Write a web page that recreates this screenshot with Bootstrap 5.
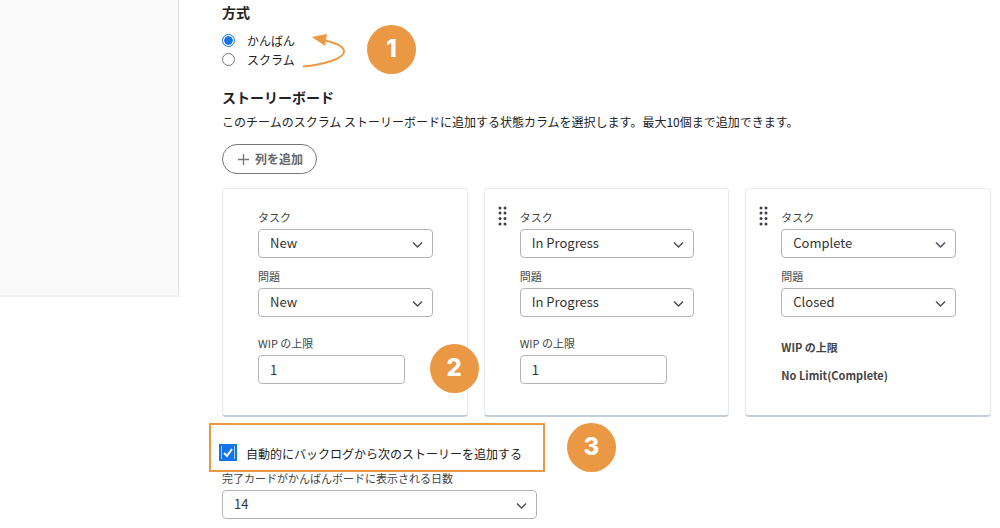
<!DOCTYPE html>
<html lang="ja">
<head>
<meta charset="utf-8">
<meta name="viewport" content="width=device-width, initial-scale=1">
<title>チーム設定</title>
<link rel="stylesheet" href="https://cdn.jsdelivr.net/npm/bootstrap@5.3.0/dist/css/bootstrap.min.css">
<style>
  body { font-family: "Noto Sans CJK JP", sans-serif; font-size: 12px; line-height: 20px; color: #222; background: #fff; }
  .side-panel { width: 179px; height: 297px; background: #fafafa; border-right: 1px solid #e1e1e1; border-bottom: 2px solid #f0f0f0; }
  .settings { padding: 1px 9px 8px 43px; min-width: 0; }
  .section-title { font-size: 14px; line-height: 22px; font-weight: 700; margin: 0; }
  .board-title { margin-top: 12px; }
  .method { margin-top: 8px; }
  .method .form-check { display: flex; align-items: center; min-height: 0; height: 19px; padding: 0; margin: 0; }
  .method .form-check-input { width: 13px; height: 13px; margin: 0 12px 0 0; float: none; border-color: #767676; box-shadow: none; }
  .method .form-check-input:checked { background: #1473e6 content-box; border: 1px solid #1473e6; padding: 1px; box-shadow: inset 0 0 0 1px #fff; }
  .step { width: 49px; height: 49px; border-radius: 50%; background: #eb9844; color: #fff; font: 800 24px/48px Inter, sans-serif; text-align: center; flex: none; }
  .method-step { margin: 2px 0 0 19px; }
  .auto-step { margin: 6px 0 0 22px; }
  .arrow { margin: 3px 0 0 5px; }
  .btn-add { font-size: 12px; line-height: 18px; font-weight: 700; color: #666; border: 1px solid #777; border-radius: 15px; padding: 5px 13px 5px 15px; margin: 12px 0 14px; }
  .btn-add svg { margin-right: 6px; }
  .column-card { height: 100%; padding: 18px 34px 30px 35px; border: 1px solid #e6eaec; border-bottom: 2px solid #c5ced6; border-radius: 4px; }
  .field-label { display: block; font-size: 11px; line-height: 20px; color: #444; margin: 0 0 2px; }
  .field { font-size: 13px; line-height: 18px; height: 29px; min-height: 0; color: #333; padding: 4px 11px 5px; border: 1px solid #b3b3b3; border-radius: 4px; }
  select.field { background: #fff url("data:image/svg+xml,%3Csvg xmlns='http://www.w3.org/2000/svg' width='11' height='8'%3E%3Cpath d='M1 1.5l4.5 4.5L10 1.5' fill='none' stroke='%234b4f59' stroke-width='1.5'/%3E%3C/svg%3E") no-repeat right 9px top 11px / 11px 8px; }
  .wip { margin-top: 16px; }
  .wip .field { width: 147px; max-width: 100%; }
  .limit { font-size: 11px; line-height: 20px; font-weight: 700; color: #444; }
  .grip { position: absolute; left: 13px; top: 17px; }
  .on-card { position: absolute; right: -12px; bottom: 22px; z-index: 2; }
  .highlight { width: 336px; height: 49px; margin: 6px 0 0 -13px; padding: 19px 0 0 8px; border: 2px solid #eb9844; }
  .auto-check[type=checkbox] { width: 18px; height: 17px; margin: 0 9px 0 0; border: 0; border-radius: 0; flex: none; }
  .auto-check:checked { background: #1473e6 url("data:image/svg+xml,%3Csvg xmlns='http://www.w3.org/2000/svg' viewBox='0 0 18 17'%3E%3Cpath d='M2.5 2v13M15.5 2v13' stroke='%23a9cdf8'/%3E%3Cpath d='M5 9l3 3 5-7' fill='none' stroke='%23fff' stroke-width='2'/%3E%3C/svg%3E") center / 18px 17px no-repeat; }
  .days { width: 315px; max-width: 100%; margin-top: -4px; }
</style>
</head>
<body>
<div class="d-flex align-items-start">
  <aside class="side-panel flex-shrink-0"></aside>
  <main class="settings flex-grow-1">
    <h2 class="section-title">方式</h2>
    <div class="d-flex align-items-start">
      <div class="method">
        <div class="form-check">
          <input class="form-check-input" type="radio" name="method" id="kanban" checked>
          <label for="kanban">かんばん</label>
        </div>
        <div class="form-check">
          <input class="form-check-input" type="radio" name="method" id="scrum">
          <label for="scrum">スクラム</label>
        </div>
      </div>
      <svg class="arrow" width="48" height="46" viewBox="300 26 48 46" aria-hidden="true">
        <path d="M303 66.500C322 65 344 59 344 51.500C344 47 336 43 325 40.500" fill="none" stroke="#eb9844" stroke-width="2"/>
        <path d="M312 37l15-3-2 12z" fill="#eb9844"/>
      </svg>
      <div class="step method-step">1</div>
    </div>

    <h2 class="section-title board-title">ストーリーボード</h2>
    <p class="mb-0 mt-1">このチームのスクラム ストーリーボードに追加する状態カラムを選択します。最大10個まで追加できます。</p>
    <button type="button" class="btn btn-add d-flex align-items-center">
      <svg width="11" height="11" viewBox="0 0 11 11" aria-hidden="true"><path d="M5.500 0v11M0 5.500h11" stroke="#777" stroke-width="1.300"/></svg>列を追加
    </button>

    <div class="row g-3 row-cols-3">
      <div class="col">
        <section class="column-card position-relative">
          <label class="field-label" for="task1">タスク</label>
          <select class="form-select field" id="task1"><option>New</option></select>
          <div class="mt-2"><label class="field-label" for="issue1">問題</label>
          <select class="form-select field" id="issue1"><option>New</option></select></div>
          <div class="wip"><label class="field-label" for="wip1">WIP の上限</label>
          <input class="form-control field" id="wip1" value="1"></div>
          <div class="step on-card">2</div>
        </section>
      </div>
      <div class="col">
        <section class="column-card position-relative">
          <svg class="grip" width="9" height="20" viewBox="0 0 9 20" fill="#3d4048" aria-hidden="true"><circle cx="2" cy="2" r="1.500"/><circle cx="7" cy="2" r="1.500"/><circle cx="2" cy="7" r="1.500"/><circle cx="7" cy="7" r="1.500"/><circle cx="2" cy="12.500" r="1.500"/><circle cx="7" cy="12.500" r="1.500"/><circle cx="2" cy="18" r="1.500"/><circle cx="7" cy="18" r="1.500"/></svg>
          <label class="field-label" for="task2">タスク</label>
          <select class="form-select field" id="task2"><option>In Progress</option></select>
          <div class="mt-2"><label class="field-label" for="issue2">問題</label>
          <select class="form-select field" id="issue2"><option>In Progress</option></select></div>
          <div class="wip"><label class="field-label" for="wip2">WIP の上限</label>
          <input class="form-control field" id="wip2" value="1"></div>
        </section>
      </div>
      <div class="col">
        <section class="column-card position-relative">
          <svg class="grip" width="9" height="20" viewBox="0 0 9 20" fill="#3d4048" aria-hidden="true"><circle cx="2" cy="2" r="1.500"/><circle cx="7" cy="2" r="1.500"/><circle cx="2" cy="7" r="1.500"/><circle cx="7" cy="7" r="1.500"/><circle cx="2" cy="12.500" r="1.500"/><circle cx="7" cy="12.500" r="1.500"/><circle cx="2" cy="18" r="1.500"/><circle cx="7" cy="18" r="1.500"/></svg>
          <label class="field-label" for="task3">タスク</label>
          <select class="form-select field" id="task3"><option>Complete</option></select>
          <div class="mt-2"><label class="field-label" for="issue3">問題</label>
          <select class="form-select field" id="issue3"><option>Closed</option></select></div>
          <div class="wip limit pt-1">WIP の上限</div>
          <div class="limit mt-2">No Limit(Complete)</div>
        </section>
      </div>
    </div>

    <div class="d-flex align-items-start">
      <div class="highlight d-flex align-items-start">
        <input class="form-check-input auto-check" type="checkbox" id="auto" checked>
        <label for="auto">自動的にバックログから次のストーリーを追加する</label>
      </div>
      <div class="step auto-step">3</div>
    </div>
    <div class="days">
      <label class="field-label" for="days">完了カードがかんばんボードに表示される日数</label>
      <select class="form-select field" id="days"><option>14</option></select>
    </div>
  </main>
</div>
<script src="https://cdn.jsdelivr.net/npm/bootstrap@5.3.0/dist/js/bootstrap.bundle.min.js"></script>
</body>
</html>
